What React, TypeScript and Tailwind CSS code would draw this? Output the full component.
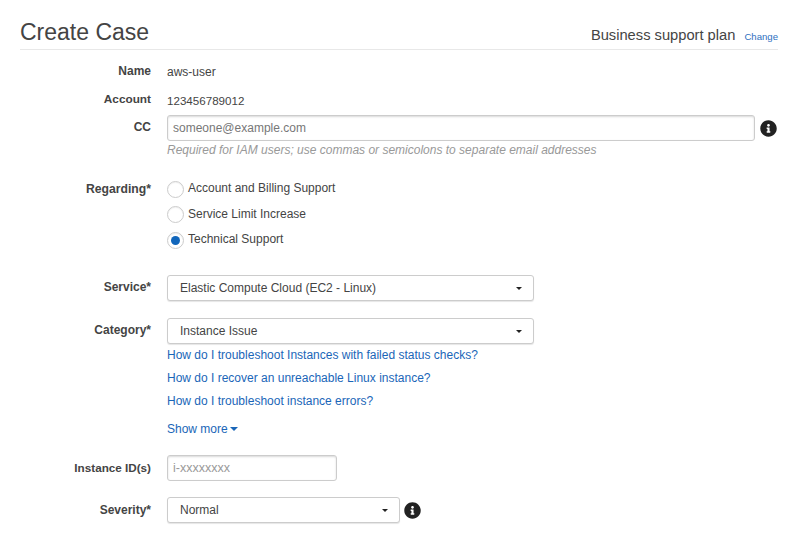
import React from "react";
import { FaInfoCircle } from "react-icons/fa";

function Label({ children, size = "text-[12px]" }: { children: React.ReactNode; size?: string }) {
  return <div className={`w-[151px] shrink-0 text-right font-bold ${size} leading-[16px] text-[#444]`}>{children}</div>;
}

function Caret() {
  return <span className="ml-auto w-0 h-0 border-x-[3px] border-x-transparent border-t-[3px] border-t-[#222]" />;
}

function Select({ value, width }: { value: string; width: string }) {
  return (
    <div className={`${width} h-[26px] flex items-center pl-[12px] pr-[11px] bg-white border border-[#ccc] rounded-[3px] shadow-[0_1px_1px_rgba(0,0,0,0.1)] text-[12px] text-[#444]`}>
      <span>{value}</span>
      <Caret />
    </div>
  );
}

function Radio({ checked, label }: { checked?: boolean; label: string }) {
  return (
    <div className="h-[16px] flex items-center gap-[4px] text-[12px] text-[#444]">
      <span className="w-[17px] h-[17px] shrink-0 rounded-full bg-white border border-[#ccc] shadow-[inset_0_1px_1px_rgba(0,0,0,0.06)] flex items-center justify-center">
        {checked && <span className="w-[9px] h-[9px] rounded-full bg-[#1166bb]" />}
      </span>
      <span className="relative top-[-1px]">{label}</span>
    </div>
  );
}

export default function App() {
  return (
    <div className="w-[800px] h-[536px] overflow-hidden bg-white pl-[20px] pr-[22px] font-['Liberation_Sans',Arial,sans-serif] text-[12px] text-[#444]">
      <div className="h-[50px] pt-[19px] border-b border-[#e8e8e8] flex items-start justify-between">
        <h1 className="text-[23px] leading-[26px] text-[#444]">Create Case</h1>
        <div className="flex items-baseline gap-[9px] pt-[7px]">
          <span className="text-[14.7px] leading-[18px] text-[#444]">Business support plan</span>
          <a className="text-[9.6px] text-[#2d6fc0]">Change</a>
        </div>
      </div>
      <div className="-ml-[20px] flex flex-col">
        <div className="flex gap-[16px] mt-[13px] h-[16px]">
          <Label>Name</Label>
          <span className="leading-[16px] pt-[1px]">aws-user</span>
        </div>
        <div className="flex gap-[16px] mt-[12px] h-[16px]">
          <Label size="text-[11.8px]">Account</Label>
          <span className="leading-[16px] pt-[2px] text-[11.6px]">123456789012</span>
        </div>
        <div className="flex gap-[16px] mt-[8px] items-start">
          <div className="pt-[4px]"><Label>CC</Label></div>
          <div className="flex flex-col">
            <div className="flex items-center gap-[5px]">
              <div className="w-[588px] h-[26px] flex items-center px-[5px] border border-[#ccc] rounded-[3px] shadow-[inset_0_1px_2px_rgba(0,0,0,0.15)] text-[#777]">someone@example.com</div>
              <FaInfoCircle className="w-[17px] h-[17px] text-[#222]" />
            </div>
            <div className="italic text-[#999] leading-[16px] mt-[1px]">Required for IAM users; use commas or semicolons to separate email addresses</div>
          </div>
        </div>
        <div className="flex gap-[16px] mt-[23px]">
          <Label size="text-[12.2px]">Regarding*</Label>
          <div className="flex flex-col gap-[9.5px]">
            <Radio label="Account and Billing Support" />
            <Radio label="Service Limit Increase" />
            <Radio checked label="Technical Support" />
          </div>
        </div>
        <div className="flex gap-[16px] mt-[27px] items-center">
          <div className="pb-[2px]"><Label>Service*</Label></div>
          <Select value="Elastic Compute Cloud (EC2 - Linux)" width="w-[367px]" />
        </div>
        <div className="flex gap-[16px] mt-[17px] items-center">
          <div className="pb-[2px]"><Label>Category*</Label></div>
          <Select value="Instance Issue" width="w-[367px]" />
        </div>
        <div className="ml-[167px] flex flex-col gap-[7px] mt-[3px] text-[#1a66b8] leading-[16px]">
          <a>How do I troubleshoot Instances with failed status checks?</a>
          <a>How do I recover an unreachable Linux instance?</a>
          <a>How do I troubleshoot instance errors?</a>
          <a className="mt-[5px] flex items-center gap-[2px]">Show more<span className="w-0 h-0 border-x-[4px] border-x-transparent border-t-[4px] border-t-[#1a66b8]" /></a>
        </div>
        <div className="flex gap-[16px] mt-[18px] items-center">
          <Label size="text-[11.7px]">Instance ID(s)</Label>
          <div className="w-[170px] h-[26px] flex items-center px-[5px] border border-[#ccc] rounded-[3px] shadow-[inset_0_1px_2px_rgba(0,0,0,0.15)] text-[#999] text-[12.5px]">i-xxxxxxxx</div>
        </div>
        <div className="flex gap-[16px] mt-[16px] items-center">
          <Label>Severity*</Label>
          <div className="flex items-center gap-[4px]">
            <Select value="Normal" width="w-[233px]" />
            <FaInfoCircle className="w-[17px] h-[17px] text-[#222]" />
          </div>
        </div>
      </div>
    </div>
  );
}
